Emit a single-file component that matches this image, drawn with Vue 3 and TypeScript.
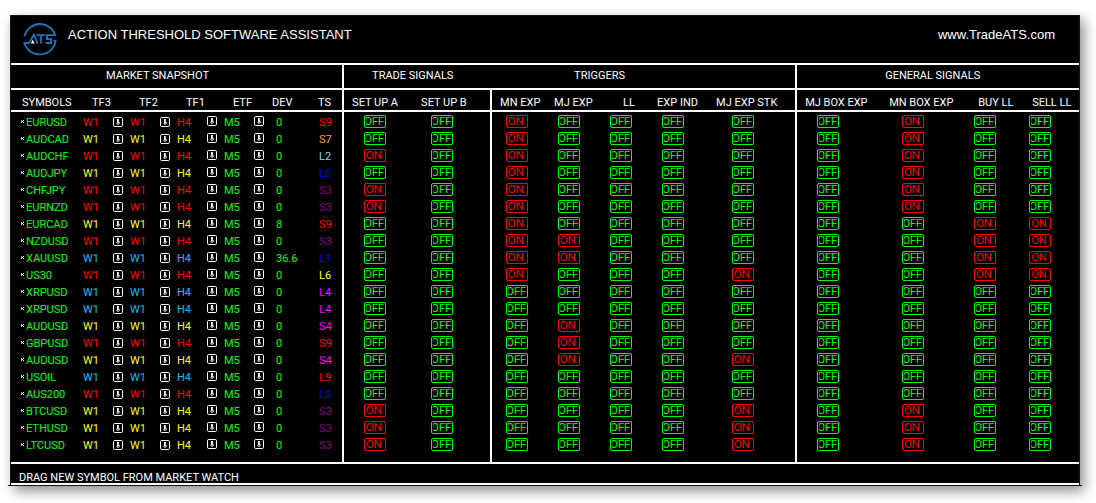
<script setup lang="ts">
type Tone = 'red' | 'yellow' | 'blue'

interface Row {
  symbol: string
  tone: Tone
  dev: string
  ts: string
  tsTone: string
  on: string[]
}

const frames = [
  { key: 'tf3', label: 'TF3', value: 'W1' },
  { key: 'tf2', label: 'TF2', value: 'W1' },
  { key: 'tf1', label: 'TF1', value: 'H4' },
  { key: 'etf', label: 'ETF', value: 'M5' },
]

const signals = [
  { key: 'setup-a', label: 'SET UP A' },
  { key: 'setup-b', label: 'SET UP B' },
  { key: 'mn-exp', label: 'MN EXP' },
  { key: 'mj-exp', label: 'MJ EXP' },
  { key: 'll', label: 'LL' },
  { key: 'exp-ind', label: 'EXP IND' },
  { key: 'mj-stk', label: 'MJ EXP STK' },
  { key: 'mj-box', label: 'MJ BOX EXP' },
  { key: 'mn-box', label: 'MN BOX EXP' },
  { key: 'buy-ll', label: 'BUY LL' },
  { key: 'sell-ll', label: 'SELL LL' },
]

function row(symbol: string, tone: Tone, dev: string, ts: string, tsTone: string, on = ''): Row {
  return { symbol, tone, dev, ts, tsTone, on: on.split(' ') }
}

const rows: Row[] = [
  row('EURUSD', 'red', '0', 'S9', 'red', 'mn-exp mn-box'),
  row('AUDCAD', 'yellow', '0', 'S7', 'orange', 'mn-exp mn-box'),
  row('AUDCHF', 'red', '0', 'L2', 'sky', 'setup-a mn-exp mn-box'),
  row('AUDJPY', 'yellow', '0', 'L0', 'navy', 'mn-exp mn-box'),
  row('CHFJPY', 'red', '0', 'S3', 'purple', 'setup-a mn-exp mn-box'),
  row('EURNZD', 'red', '0', 'S3', 'purple', 'setup-a mn-exp mn-box'),
  row('EURCAD', 'yellow', '8', 'S9', 'red', 'mn-exp buy-ll sell-ll'),
  row('NZDUSD', 'red', '0', 'S3', 'purple', 'mn-exp mj-exp buy-ll sell-ll'),
  row('XAUUSD', 'blue', '36.6', 'L1', 'navy', 'mn-exp mj-exp buy-ll sell-ll'),
  row('US30', 'red', '0', 'L6', 'yellow', 'mn-exp mj-stk buy-ll sell-ll'),
  row('XRPUSD', 'blue', '0', 'L4', 'magenta'),
  row('XRPUSD', 'blue', '0', 'L4', 'magenta'),
  row('AUDUSD', 'yellow', '0', 'S4', 'magenta', 'mj-exp'),
  row('GBPUSD', 'red', '0', 'S9', 'red', 'mj-exp'),
  row('AUDUSD', 'yellow', '0', 'S4', 'magenta', 'mj-exp mj-stk'),
  row('USOIL', 'blue', '0', 'L9', 'red'),
  row('AUS200', 'red', '0', 'L0', 'navy'),
  row('BTCUSD', 'yellow', '0', 'S3', 'purple', 'setup-a mj-stk mn-box'),
  row('ETHUSD', 'yellow', '0', 'S3', 'purple', 'setup-a mj-stk mn-box'),
  row('LTCUSD', 'yellow', '0', 'S3', 'purple', 'setup-a mj-stk mn-box'),
]
</script>

<template>
  <main class="panel">
    <header class="top">
      <svg class="logo" viewBox="0 0 34 34" aria-label="ATS">
        <g fill="none" stroke="#1c75bc" stroke-width="1.8">
          <path d="M1.4 14.2A16 16 0 0 1 32.2 13.2H24V17.2H28.2V21H22.4" />
          <path d="M1.4 21A16 16 0 0 0 32.6 18.6H30.4" />
          <path d="M0.6 21H6L10.8 12.8L14.8 21.6" />
          <path d="M13.4 13.2H22M18 13.2V21.6" />
        </g>
        <path d="M9.6 17.6L11.6 21.6H8Z" fill="#fff" />
      </svg>
      <h1>ACTION THRESHOLD SOFTWARE ASSISTANT</h1>
      <a class="site" href="#">www.TradeATS.com</a>
    </header>

    <table>
      <colgroup>
        <col class="w-symbol" />
        <col v-for="f in frames" :key="f.key" class="w-frame" />
        <col class="w-frame" />
        <col class="w-ts" />
        <col v-for="s in signals" :key="s.key" :class="'w-' + s.key" />
      </colgroup>
      <thead>
        <tr class="groups">
          <th colspan="7" class="g-market">MARKET SNAPSHOT</th>
          <th colspan="2" class="g-trade divider">TRADE SIGNALS</th>
          <th colspan="5" class="g-triggers">TRIGGERS</th>
          <th colspan="4" class="g-general divider">GENERAL SIGNALS</th>
        </tr>
        <tr class="labels">
          <th class="h-symbol">SYMBOLS</th>
          <th v-for="f in frames" :key="f.key" class="h-frame">{{ f.label }}</th>
          <th class="h-dev">DEV</th>
          <th>TS</th>
          <th v-for="s in signals" :key="s.key" class="h-signal" :class="s.key">{{ s.label }}</th>
        </tr>
      </thead>
      <tbody>
        <tr v-for="(r, i) in rows" :key="i">
          <td>
            <div class="cell symbol">
              <svg class="tick" viewBox="0 0 4 5" aria-hidden="true">
                <path d="M0 1H1V4H0Z" fill="#bbb" />
                <path d="M1 2H2V3H1ZM2 1H3V2H2ZM2 3H3V4H2Z" fill="#fff" />
              </svg>
              <span>{{ r.symbol }}</span>
            </div>
          </td>
          <td v-for="f in frames" :key="f.key">
            <div class="cell frame" :class="[f.key, r.tone]">
              <span>{{ f.value }}</span>
              <button type="button" class="pick" :aria-label="r.symbol + ' ' + f.label">
                <svg viewBox="0 0 10 10" aria-hidden="true">
                  <rect x="0.5" y="0.5" width="9" height="9" rx="1.2" fill="#000" stroke="#fff" />
                  <path d="M4 2H6V5H7V7H6V8H4V7H3V6H4Z" fill="#7f98ac" />
                  <path d="M4 2H5V6H4Z" fill="#fff" />
                  <path d="M5 2H6V6H5Z" fill="#b8dcf5" />
                </svg>
              </button>
            </div>
          </td>
          <td><div class="cell dev">{{ r.dev }}</div></td>
          <td><div class="cell ts" :class="r.tsTone">{{ r.ts }}</div></td>
          <td v-for="s in signals" :key="s.key" class="signal" :class="s.key">
            <div class="cell">
              <button
                type="button"
                class="flag"
                :class="{ on: r.on.includes(s.key) }"
                :aria-label="r.symbol + ' ' + s.label"
              >
                <span>{{ r.on.includes(s.key) ? 'ON' : 'OFF' }}</span>
              </button>
            </div>
          </td>
        </tr>
      </tbody>
    </table>

    <footer>DRAG NEW SYMBOL FROM MARKET WATCH</footer>
  </main>
</template>

<style>
body {
  padding: 15px 16px 17px 10px;
  background: #fff;
}
</style>

<style scoped>
.panel {
  position: relative;
  border: 1px solid #151515;
  background: #000;
  color: #fff;
  font: 11px/13px Roboto, "Liberation Sans", sans-serif;
  box-shadow: 4px 5px 12px rgba(0, 0, 0, 0.45);
}

.panel::after {
  content: "";
  position: absolute;
  left: -3px;
  right: -3px;
  bottom: -1px;
  height: 1px;
  background: #151515;
}

.top {
  display: flex;
  align-items: flex-start;
  height: 47px;
  box-sizing: border-box;
  padding: 6px 24px 0 12px;
}

.logo {
  width: 34px;
  height: 34px;
}

h1,
.site {
  font: 13px/18px "Liberation Sans", Arial, sans-serif;
}

h1 {
  margin: 4px 0 0 11px;
}

.site {
  margin: 4px 0 0 auto;
  color: #fff;
  text-decoration: none;
}

table {
  width: 100%;
  table-layout: fixed;
  border-collapse: separate;
  border-spacing: 0;
  border-top: 2px solid #fff;
  border-bottom: 2px solid #fff;
}

.w-symbol { width: 72px; }
.w-frame { width: 47px; }
.w-ts { width: 24px; }
.w-setup-a { width: 71px; }
.w-setup-b { width: 77px; }
.w-mn-exp { width: 56px; }
.w-mj-exp { width: 56px; }
.w-ll { width: 47px; }
.w-exp-ind { width: 59px; }
.w-mj-stk { width: 87px; }
.w-mj-box { width: 86px; }
.w-mn-box { width: 89px; }
.w-buy-ll { width: 54px; }
.w-sell-ll { width: 55px; }

th,
td {
  padding: 0;
  text-align: left;
  font-weight: 400;
  white-space: nowrap;
}

th {
  box-sizing: border-box;
  border-bottom: 2px solid #fff;
}

.groups th { height: 25px; padding-bottom: 2px; }
.labels th { height: 22px; padding-top: 4px; }

.divider,
.setup-a,
.mn-exp,
.mj-box {
  border-left: 2px solid #fff;
}

.groups .g-market { padding-left: 95px; }
.groups .g-trade { padding-left: 28px; }
.groups .g-triggers { padding-left: 84px; }
.groups .g-general { padding-left: 88px; }

.labels .h-symbol { padding-left: 11px; }
.labels .h-frame { padding-left: 9px; }
.labels .h-dev { padding-left: 1px; }
.labels .h-signal { padding-left: 8px; }
.labels .ll { padding-left: 21px; }

.cell {
  display: flex;
  align-items: center;
  height: 17px;
}

tbody tr:first-child td { padding-top: 1px; }
tbody tr:last-child td { padding-bottom: 9px; }

.symbol {
  gap: 1px;
  padding-left: 10px;
  color: #0f0;
}

.tick {
  width: 4px;
  height: 5px;
}

.symbol span,
.frame span,
.dev,
.ts {
  padding-top: 1px;
  box-sizing: border-box;
}

.frame span { width: 30px; }

.pick {
  width: 10px;
  height: 10px;
  padding: 0;
  border: 0;
  background: none;
  margin-top: 1px;
}

.tf1 .pick,
.etf .pick {
  margin-top: 0;
  margin-bottom: 1px;
}

.pick svg { display: block; width: 10px; height: 10px; }

.dev { padding-left: 5px; color: #0f0; }
.ts { padding-left: 1px; }

.red { color: #f00; }
.yellow { color: #ff0; }
.blue { color: #00bfff; }
.orange { color: #ffa500; }
.sky { color: #87ceeb; }
.navy { color: #0000e6; }
.purple { color: #800080; }
.magenta { color: #f0f; }
.etf { color: #0f0; }

.signal.setup-a { padding-left: 20px; }
.signal.setup-b { padding-left: 18px; }
.signal.mn-exp { padding-left: 14px; }
.signal.mj-exp { padding-left: 12px; }
.signal.ll { padding-left: 8px; }
.signal.exp-ind { padding-left: 13px; }
.signal.mj-stk { padding-left: 24px; }
.signal.mj-box { padding-left: 20px; }
.signal.mn-box { padding-left: 21px; }
.signal.buy-ll { padding-left: 4px; }
.signal.sell-ll { padding-left: 5px; }

.flag {
  width: 22px;
  height: 13px;
  box-sizing: border-box;
  padding: 0 1px;
  border: 1px solid #0f0;
  border-radius: 2px;
  background: #000;
  color: #0f0;
  font: 11px/11px Roboto, "Liberation Sans", sans-serif;
}

.flag span {
  display: flex;
  justify-content: flex-end;
  overflow: hidden;
  height: 11px;
}

.flag.on {
  border-color: #f00;
  color: #f00;
}

.flag.on span { justify-content: flex-start; }

footer {
  height: 21px;
  box-sizing: border-box;
  padding: 8px 8px 0;
  line-height: 11px;
  border-bottom: 2px solid #fff;
}
</style>
